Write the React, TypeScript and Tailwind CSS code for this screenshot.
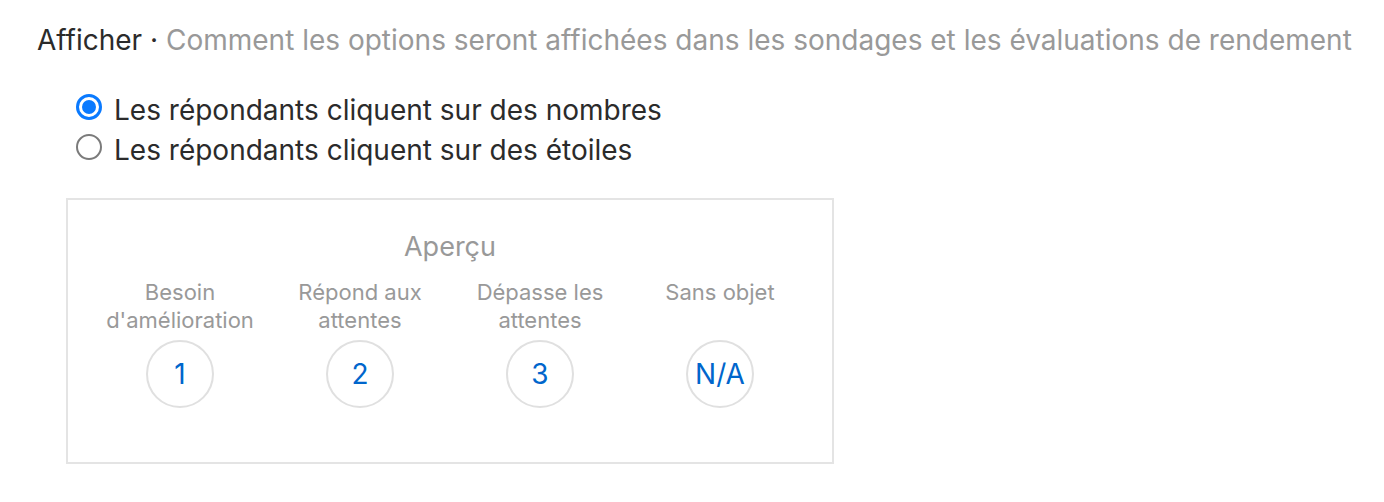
import React from 'react';

const options = [
  { label: 'Les répondants cliquent sur des nombres', checked: true },
  { label: 'Les répondants cliquent sur des étoiles', checked: false },
];

const scale = [
  { label: 'Besoin\nd\'amélioration', value: '1' },
  { label: 'Répond aux\nattentes', value: '2' },
  { label: 'Dépasse les\nattentes', value: '3' },
  { label: 'Sans objet', value: 'N/A' },
];

const Radio: React.FC<{ checked: boolean }> = ({ checked }) =>
  checked ? (
    <span className="flex h-[26px] w-[26px] shrink-0 items-center justify-center rounded-full border-[3px] border-[#0a7aff] bg-white">
      <span className="h-[14px] w-[14px] rounded-full bg-[#0a7aff]" />
    </span>
  ) : (
    <span className="h-[26px] w-[26px] shrink-0 rounded-full border-2 border-[#7b7b7b] bg-white" />
  );

export default function App() {
  return (
    <div className="min-h-[502px] w-[1384px] bg-white pl-[37px] pt-[24px] font-['Inter',sans-serif]">
      {/* titre */}
      <div className="text-[28px] leading-[32px] text-[#2b2b2b]">
        Afficher ·{' '}
        <span className="text-[#999]">
          Comment les options seront affichées dans les sondages et les évaluations de rendement
        </span>
      </div>

      {/* choix */}
      <div className="mt-[31px] flex flex-col pl-[39px]">
        {options.map((o) => (
          <label key={o.label} className="flex h-[40px] items-center gap-[12px] text-[28px] leading-[40px] text-[#2b2b2b]">
            <Radio checked={o.checked} />
            <span className="mt-[6px]">{o.label}</span>
          </label>
        ))}
      </div>

      {/* aperçu */}
      <div className="ml-[29px] mt-[31px] h-[266px] w-[768px] border-2 border-[#e4e4e4] pt-[30px]">
        <div className="text-center text-[27px] leading-[34px] text-[#999]">Aperçu</div>
        <div className="mt-[14px] flex pl-[22px]">
          {scale.map((s) => (
            <div key={s.value} className="flex w-[180px] flex-col items-center">
              <div className="h-[56px] whitespace-pre-line text-center text-[22px] leading-[28px] text-[#999]">
                {s.label}
              </div>
              <div className="mt-[6px] flex h-[68px] w-[68px] items-center justify-center rounded-full border-2 border-[#e0e0e0] text-[28px] text-[#0066cc]">
                {s.value}
              </div>
            </div>
          ))}
        </div>
      </div>
    </div>
  );
}
